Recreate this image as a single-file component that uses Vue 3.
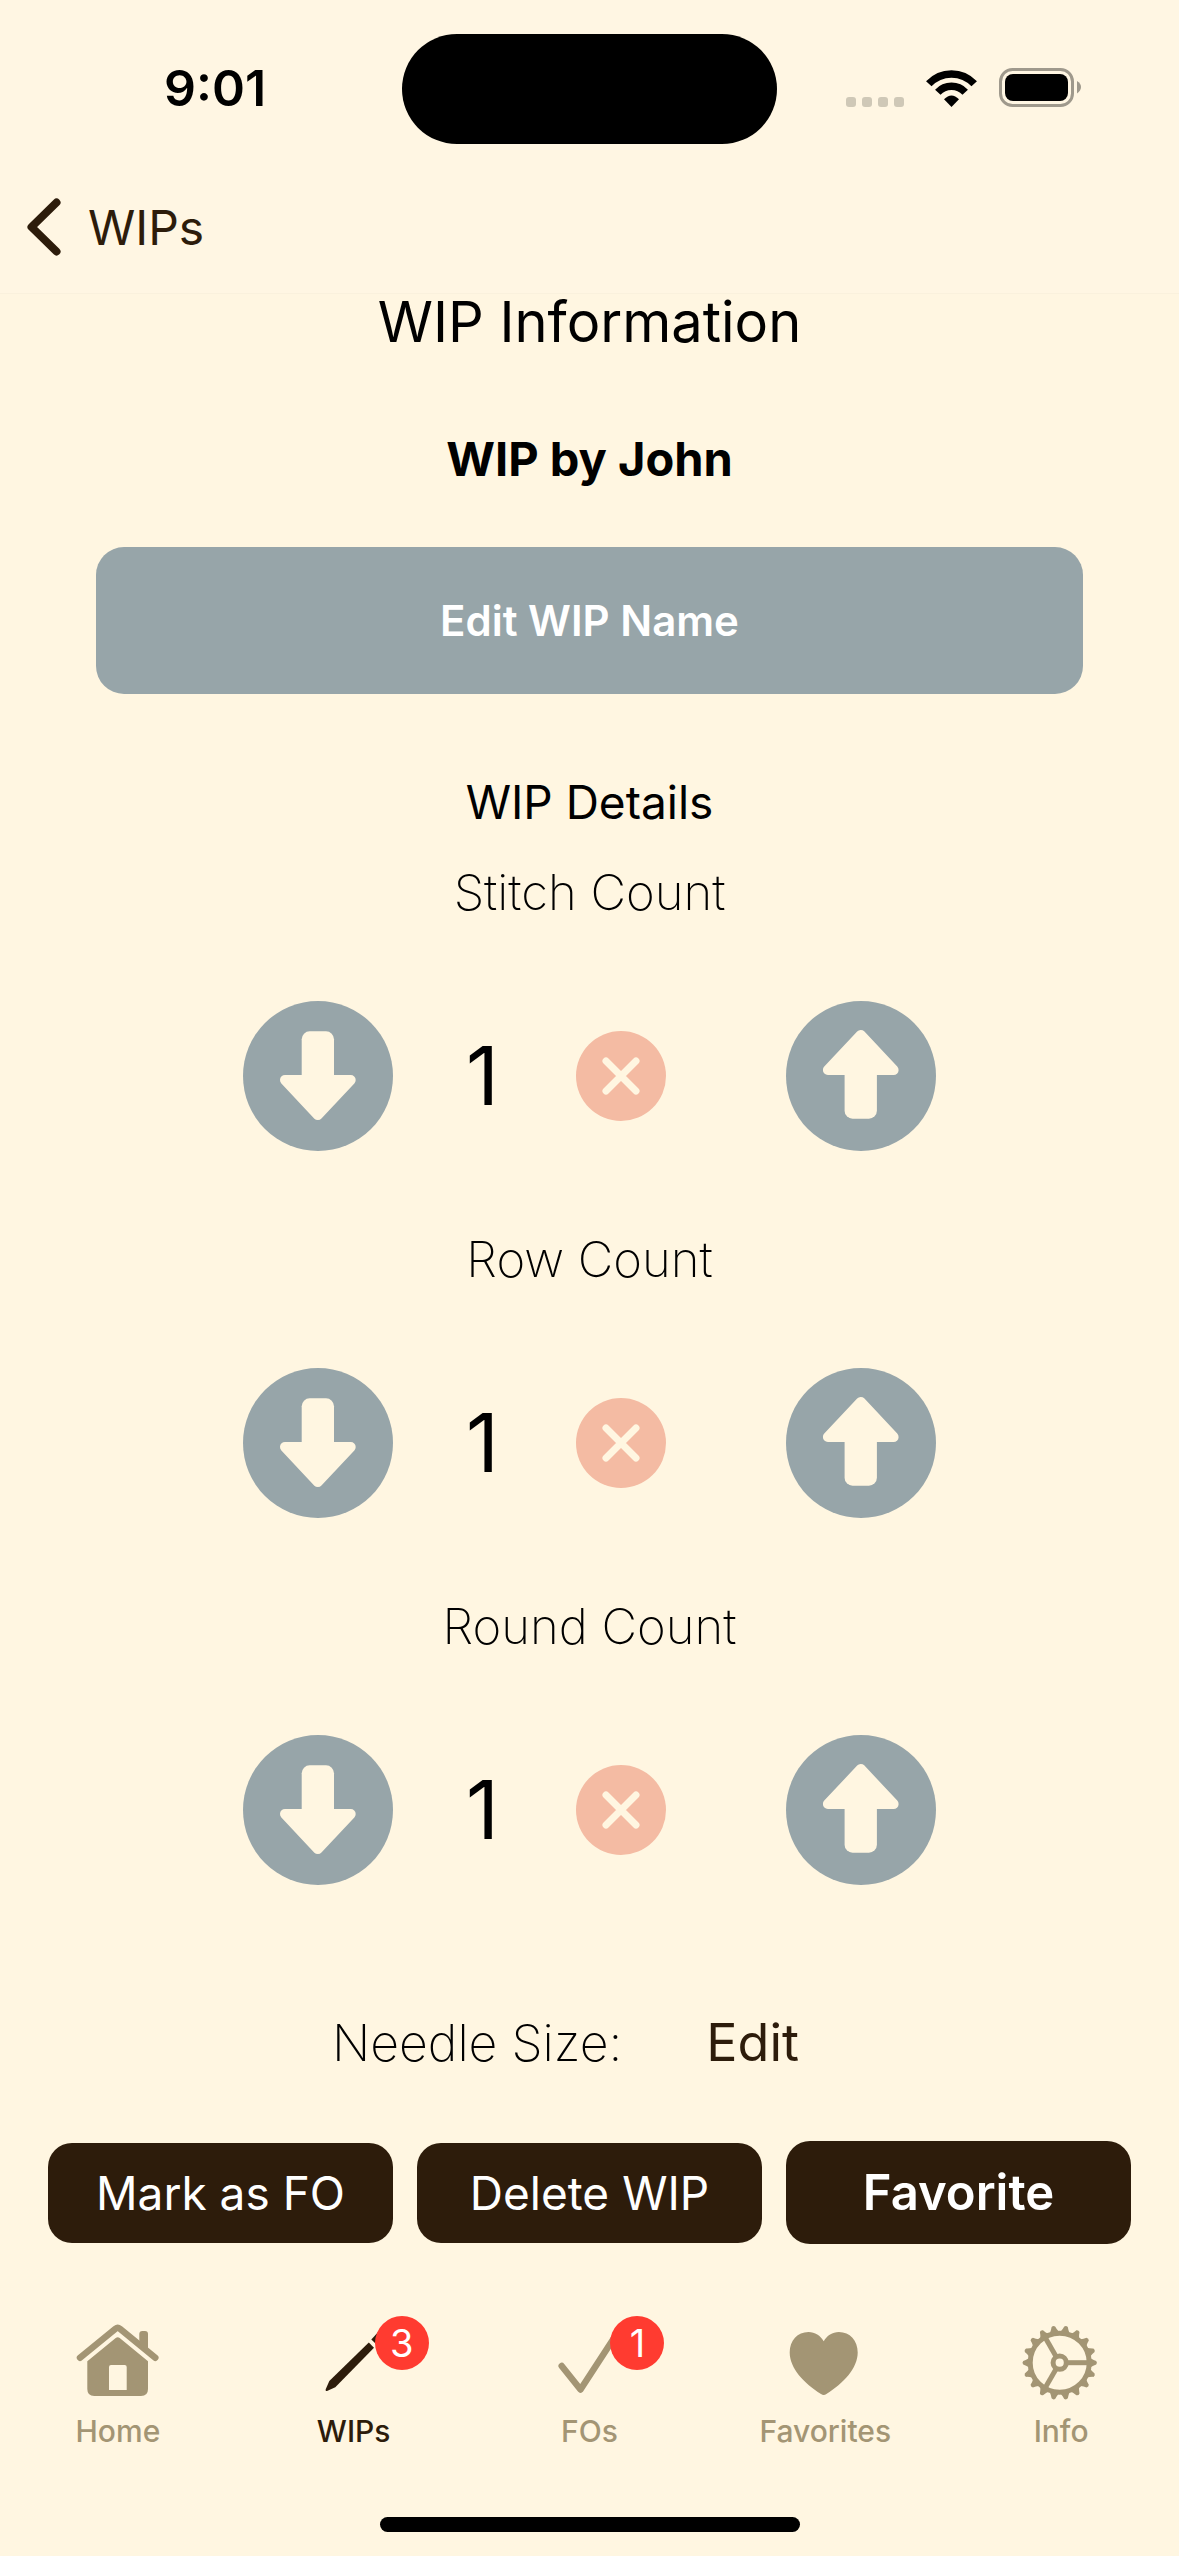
<script setup>
import { reactive } from "vue";

const counters = reactive([
  { id: "stitch", label: "Stitch Count", value: 1 },
  { id: "row", label: "Row Count", value: 1 },
  { id: "round", label: "Round Count", value: 1 },
]);

const tabs = [
  { id: "home", label: "Home" },
  { id: "wips", label: "WIPs", badge: 3, active: true },
  { id: "fos", label: "FOs", badge: 1 },
  { id: "favorites", label: "Favorites" },
  { id: "info", label: "Info" },
];

// angles of the gear teeth, 20 degrees apart
const teeth = Array.from({ length: 18 }, (_, i) => i * 20);

function decrease(counter) {
  if (counter.value > 0) counter.value--;
}
</script>

<template>
  <div class="screen">
    <div class="status-bar">
      <span class="time">9:01</span>
      <div class="island"></div>
      <div class="status-icons">
        <svg class="dots" viewBox="0 0 58 10" aria-hidden="true">
          <rect v-for="n in 4" :key="n" :x="(n - 1) * 16" y="0" width="10" height="10" rx="3" />
        </svg>
        <svg class="wifi" viewBox="0 0 51 37" aria-hidden="true">
          <path class="wifi-arc" d="M2.8 13.8A31 31 0 0 1 48.2 13.8" />
          <path class="wifi-arc" d="M11.8 22.2A18.8 18.8 0 0 1 39.2 22.2" />
          <path d="M25.5 37L18 29.3Q25.5 21.5 33 29.3Z" />
        </svg>
        <svg class="battery" viewBox="0 0 82 39" aria-hidden="true">
          <rect class="battery-shell" x="1.5" y="1.5" width="72" height="36" rx="12" />
          <rect x="6" y="6" width="63" height="27" rx="8" />
          <path class="battery-cap" d="M78 13Q82 15.500 82 19T78 25.500Z" />
        </svg>
      </div>
    </div>

    <nav class="nav-bar">
      <a class="back" href="#wips">
        <svg viewBox="0 0 34 58" aria-hidden="true">
          <path d="M29.500 4.500L4.500 29L29.500 53.500" />
        </svg>
        WIPs
      </a>
    </nav>

    <main class="content">
      <h1 class="page-title">WIP Information</h1>
      <p class="wip-name">WIP by John</p>
      <button type="button" class="edit-name">Edit WIP Name</button>
      <h2 class="details-title">WIP Details</h2>

      <section v-for="counter in counters" :key="counter.id" class="counter">
        <h3 class="counter-label">{{ counter.label }}</h3>
        <div class="counter-row">
          <button
            type="button"
            class="round-button"
            :aria-label="`Decrease ${counter.label}`"
            @click="decrease(counter)"
          >
            <svg viewBox="0 0 150 150">
              <rect x="58.700" y="30.300" width="32.300" height="52" rx="8" />
              <path class="arrow-head" d="M42 79H107.700L74.800 114Z" />
            </svg>
          </button>
          <output class="counter-value">{{ counter.value }}</output>
          <button
            type="button"
            class="reset-button"
            :aria-label="`Reset ${counter.label}`"
            @click="counter.value = 0"
          >
            <svg viewBox="0 0 90 90">
              <path d="M30 30L60 60M60 30L30 60" />
            </svg>
          </button>
          <button
            type="button"
            class="round-button"
            :aria-label="`Increase ${counter.label}`"
            @click="counter.value++"
          >
            <svg viewBox="0 0 150 150">
              <g transform="rotate(180 74.8 74)">
                <rect x="58.700" y="30.300" width="32.300" height="52" rx="8" />
                <path class="arrow-head" d="M42 79H107.700L74.800 114Z" />
              </g>
            </svg>
          </button>
        </div>
      </section>

      <div class="needle-row">
        <span class="needle-label">Needle Size:</span>
        <button type="button" class="needle-edit">Edit</button>
      </div>
    </main>

    <div class="actions">
      <button type="button" class="action">Mark as FO</button>
      <button type="button" class="action">Delete WIP</button>
      <button type="button" class="action strong">Favorite</button>
    </div>

    <nav class="tab-bar">
      <a
        v-for="tab in tabs"
        :key="tab.id"
        :href="`#${tab.id}`"
        class="tab"
        :class="{ active: tab.active }"
      >
        <span class="tab-icon">
          <svg v-if="tab.id === 'home'" viewBox="0 0 90 90" aria-hidden="true">
            <path class="line" d="M7 41.700L42.500 12.700Q44.700 11 46.900 12.700L82.300 41.700" />
            <path d="M66.300 28V18Q66.300 15 69.300 15H72Q75 15 75 18V36Z" />
            <path
              fill-rule="evenodd"
              d="M14.300 45.300L42.700 22Q44.700 20.500 46.700 22L75 45.300V73Q75 80 68 80H21.300Q14.300 80 14.300 73ZM38 49Q36 49 36 51V74H53.700V51Q53.700 49 51.700 49Z"
            />
          </svg>
          <svg v-else-if="tab.id === 'wips'" viewBox="0 0 90 90" aria-hidden="true">
            <path d="M59.800 26.500L65 31.700L26.300 71.300L18 75Q16 75 16.800 73L20.300 65Z" />
            <path d="M62.300 23.500L72 13L77 18L67 28Z" />
          </svg>
          <svg v-else-if="tab.id === 'fos'" viewBox="0 0 90 90" aria-hidden="true">
            <path class="line" d="M17.700 50L36.500 73.500L72 19" />
          </svg>
          <svg v-else-if="tab.id === 'favorites'" viewBox="0 0 90 90" aria-hidden="true">
            <path
              d="M43.700 25.300C40.500 19.500 35 16 28.500 16C17.500 16 9.700 24.500 9.700 36.500C9.700 52 24 67.500 41 78C42.800 79.200 44.600 79.200 46.400 78C63.500 67.500 77.700 52 77.700 36.500C77.700 24.500 69.900 16 58.900 16C52.400 16 46.900 19.500 43.700 25.300Z"
            />
          </svg>
          <svg v-else viewBox="0 0 90 90" aria-hidden="true">
            <g transform="translate(43.7 46.7)">
              <path
                v-for="angle in teeth"
                :key="angle"
                d="M30 -5Q34 -2.500 36.500 -1.800Q38 0 36.500 1.800Q34 2.500 30 5Z"
                :transform="`rotate(${angle})`"
              />
              <circle class="gear-ring" r="29.500" />
              <circle class="gear-hub" r="6.600" />
              <path
                v-for="angle in [0, 120, 240]"
                :key="`spoke-${angle}`"
                class="gear-spoke"
                d="M7 0H29"
                :transform="`rotate(${angle})`"
              />
            </g>
          </svg>
          <span v-if="tab.badge" class="badge">{{ tab.badge }}</span>
        </span>
        <span class="tab-label">{{ tab.label }}</span>
      </a>
    </nav>

    <div class="home-indicator"></div>
  </div>
</template>

<style>
body {
  margin: 0;
  background: #fff6e1;
}
</style>

<style scoped>
.screen {
  --cream: #fff6e1;
  --header: #fff6e3;
  --brown: #2d1c0b;
  --slate: #97a5a9;
  --olive: #a39574;
  min-height: 100vh;
  box-sizing: border-box;
  display: flex;
  flex-direction: column;
  background: var(--cream);
  color: #000;
  font-family: Inter, "Liberation Sans", sans-serif;
}

svg {
  display: block;
  width: 100%;
  height: 100%;
}

button {
  border: 0;
  margin: 0;
  padding: 0;
  font-family: inherit;
  cursor: pointer;
}

h1,
h2,
h3,
p {
  margin: 0;
  font-weight: 400;
}

/* status bar */
.status-bar {
  height: 177px;
  display: grid;
  grid-template-columns: 1fr 375px 1fr;
  align-items: center;
  background: var(--header);
}

.time {
  padding: 0 0 2px 164px;
  font-size: 50px;
  font-weight: 600;
}

.island {
  height: 110px;
  border-radius: 55px;
  background: #000;
}

.status-icons {
  display: flex;
  justify-content: flex-end;
  align-items: flex-end;
  gap: 22px;
  padding: 0 98px 2px 0;
}

.dots {
  width: 58px;
  height: 10px;
  fill: #cfc8b7;
}

.wifi {
  width: 51px;
  height: 37px;
}

.wifi-arc {
  fill: none;
  stroke: #000;
  stroke-width: 7.5;
}

.battery {
  width: 82px;
  height: 39px;
}

.battery-shell {
  fill: none;
  stroke: #9f998c;
  stroke-width: 3;
}

.battery-cap {
  fill: #9f998c;
}

/* navigation */
.nav-bar {
  height: 100px;
  display: flex;
  align-items: center;
  padding: 0 27px 16px;
  background: var(--header);
  border-bottom: 1px solid #faf1dd;
}

.back {
  display: flex;
  align-items: center;
  gap: 27px;
  color: var(--brown);
  font-size: 48px;
  text-decoration: none;
}

.back svg {
  width: 34px;
  height: 58px;
  fill: none;
  stroke: currentColor;
  stroke-width: 8;
  stroke-linecap: round;
  stroke-linejoin: round;
}

/* content */
.content {
  display: flex;
  flex-direction: column;
  align-items: center;
}

.page-title {
  font-size: 56px;
  line-height: 56px;
}

.wip-name {
  margin-top: 79px;
  font-size: 47px;
  font-weight: 700;
  line-height: 60px;
}

.edit-name {
  align-self: stretch;
  height: 147px;
  margin: 58px 96px 0;
  border-radius: 28px;
  background: var(--slate);
  color: #fff;
  font-size: 42px;
  font-weight: 600;
}

.details-title {
  margin: 78px 0 31px;
  font-size: 46px;
  line-height: 60px;
}

.counter {
  margin-bottom: 79px;
}

.counter-label {
  margin-bottom: 78px;
  font-size: 49px;
  font-weight: 200;
  line-height: 60px;
  text-align: center;
}

.counter-row {
  display: flex;
  align-items: center;
}

.round-button {
  width: 150px;
  height: 150px;
  border-radius: 50%;
  background: var(--slate);
}

.round-button svg {
  fill: var(--cream);
}

.arrow-head {
  stroke: var(--cream);
  stroke-width: 10;
  stroke-linejoin: round;
}

.counter-value {
  width: 179px;
  padding-right: 4px;
  font-size: 81px;
  line-height: 90px;
  text-align: center;
}

.reset-button {
  width: 90px;
  height: 90px;
  margin-right: 120px;
  border-radius: 50%;
  background: #f4bba3;
}

.reset-button svg {
  fill: none;
  stroke: var(--cream);
  stroke-width: 7;
  stroke-linecap: round;
}

.needle-row {
  display: flex;
  gap: 84px;
  margin-top: 49px;
  padding-right: 48px;
  font-size: 50px;
  line-height: 60px;
}

.needle-label {
  font-weight: 200;
}

.needle-edit {
  background: none;
  color: var(--brown);
  font-size: 52px;
  line-height: 60px;
}

/* action buttons */
.actions {
  display: grid;
  grid-template-columns: repeat(3, 1fr);
  align-items: center;
  gap: 24px;
  margin: 68px 48px 0;
}

.action {
  height: 100px;
  border-radius: 24px;
  background: var(--brown);
  color: #fff;
  font-size: 46px;
}

.action.strong {
  height: 103px;
  font-size: 49px;
  font-weight: 600;
}

/* tabs */
.tab-bar {
  display: grid;
  grid-template-columns: repeat(5, 1fr);
  margin-top: 72px;
}

.tab {
  display: flex;
  flex-direction: column;
  align-items: center;
  gap: 7px;
  color: var(--olive);
  text-decoration: none;
}

.tab.active {
  color: var(--brown);
}

.tab-icon {
  position: relative;
  width: 90px;
  height: 90px;
  fill: currentColor;
}

.line {
  fill: none;
  stroke: currentColor;
  stroke-width: 6.5;
  stroke-linecap: round;
  stroke-linejoin: round;
}

.gear-ring,
.gear-hub,
.gear-spoke {
  fill: none;
  stroke: currentColor;
  stroke-width: 5;
}

.badge {
  position: absolute;
  top: 0;
  left: 66px;
  width: 54px;
  height: 54px;
  border-radius: 50%;
  background: #ff3b30;
  color: #fff;
  font-size: 38px;
  line-height: 54px;
  text-align: center;
}

.tab-label {
  font-size: 30px;
  font-weight: 500;
  line-height: 36px;
}

.home-indicator {
  width: 420px;
  height: 15px;
  margin: auto auto 24px;
  border-radius: 8px;
  background: #000;
}
</style>
